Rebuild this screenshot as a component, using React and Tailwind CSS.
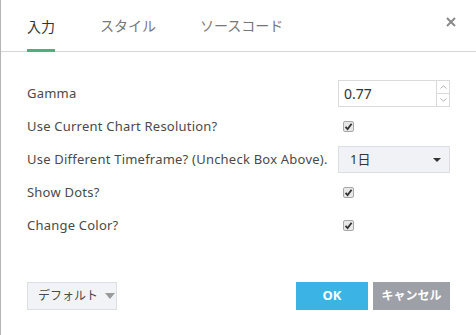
import React from 'react';

const Check = () => (
  <div className="w-[11px] h-[11px] border border-[#a8a8a8] rounded-[2px] bg-[#e8e8e8] flex items-center justify-center">
    <svg width="9" height="9" viewBox="0 0 9 9">
      <path d="M1.5 4.8 L3.6 7 L7.6 1.8" stroke="#333" strokeWidth="1.8" fill="none" />
    </svg>
  </div>
);

const Row = ({ label, children }) => (
  <div className="flex items-center h-[33px]">
    <div className="w-[311px] text-[13px] tracking-[0.22px] text-[#4a4a4a] whitespace-nowrap">{label}</div>
    <div className="flex-1">{children}</div>
  </div>
);

export default function App() {
  const font = { fontFamily: '"Noto Sans", "Noto Sans CJK JP", sans-serif' };
  return (
    <div className="w-[476px] h-[335px] bg-[#d9dadc] flex" style={font}>
      <div className="w-[1px] bg-white" />
      <div className="flex-1 bg-white border-l border-r border-[#b5b5b5] flex flex-col">
        <div className="h-[52px] border-b border-[#d6d6d6] flex items-stretch pl-[26px] pr-[20px]">
          <div className="flex flex-col justify-end">
            <div className="text-[14px] text-[#333] pb-[12px]">入力</div>
            <div className="h-[3px] bg-[#4caf7d] -mb-[1px]" />
          </div>
          <div className="ml-[45px] flex flex-col justify-end">
            <div className="text-[14px] text-[#777] pb-[15px]">スタイル</div>
          </div>
          <div className="ml-[44px] flex flex-col justify-end">
            <div className="text-[14px] text-[#777] pb-[15px]">ソースコード</div>
          </div>
          <div className="ml-auto flex items-center pb-[8px]">
            <svg width="10" height="10" viewBox="0 0 10 10">
              <path d="M1 1 L9 9 M9 1 L1 9" stroke="#8a8a8a" strokeWidth="2" />
            </svg>
          </div>
        </div>

        <div className="px-[26px] pt-[25px] flex flex-col">
          <Row label="Gamma">
            <div className="w-[112px] h-[27px] border border-[#dadada] flex">
              <div className="flex-1 pl-[5px] flex items-center text-[14px] text-[#333]">0.77</div>
              <div className="w-[13px] border-l border-[#dadada] flex flex-col">
                <div className="flex-1 flex items-center justify-center">
                  <svg width="7" height="4" viewBox="0 0 7 4"><path d="M0.5 3.5 L3.5 0.8 L6.5 3.5" stroke="#b0b0b0" fill="none" /></svg>
                </div>
                <div className="flex-1 border-t border-[#dadada] flex items-center justify-center">
                  <svg width="7" height="4" viewBox="0 0 7 4"><path d="M0.5 0.5 L3.5 3.2 L6.5 0.5" stroke="#b0b0b0" fill="none" /></svg>
                </div>
              </div>
            </div>
          </Row>
          <Row label="Use Current Chart Resolution?">
            <div className="pl-[5px]"><Check /></div>
          </Row>
          <Row label="Use Different Timeframe? (Uncheck Box Above).">
            <div className="w-[112px] h-[27px] border border-[#dcdee3] bg-[#f0f2f5] flex items-center justify-between pl-[11px] pr-[8px]">
              <span className="text-[13px] text-[#333]">1日</span>
              <svg width="8" height="4" viewBox="0 0 8 4"><path d="M0 0 L8 0 L4 4 Z" fill="#333" /></svg>
            </div>
          </Row>
          <Row label="Show Dots?">
            <div className="pl-[5px]"><Check /></div>
          </Row>
          <Row label="Change Color?">
            <div className="pl-[5px]"><Check /></div>
          </Row>
        </div>

        <div className="mt-auto mb-[25px] px-[26px] flex items-center">
          <div className="w-[90px] h-[28px] border border-[#dcdee3] bg-[#f2f3f6] flex items-center pl-[10px] gap-[7px] text-[12px] text-[#4a4a4a] whitespace-nowrap">
            デフォルト
            <svg width="10" height="6" viewBox="0 0 10 6"><path d="M0 0 L10 0 L5 6 Z" fill="#9a9a9a" /></svg>
          </div>
          <div className="ml-auto w-[72px] h-[28px] bg-[#3bb3e4] text-white text-[13px] font-bold flex items-center justify-center">OK</div>
          <div className="ml-[5px] w-[77px] h-[28px] bg-[#9ea0a8] text-white text-[12px] font-bold flex items-center justify-center whitespace-nowrap">キャンセル</div>
        </div>
      </div>
    </div>
  );
}
